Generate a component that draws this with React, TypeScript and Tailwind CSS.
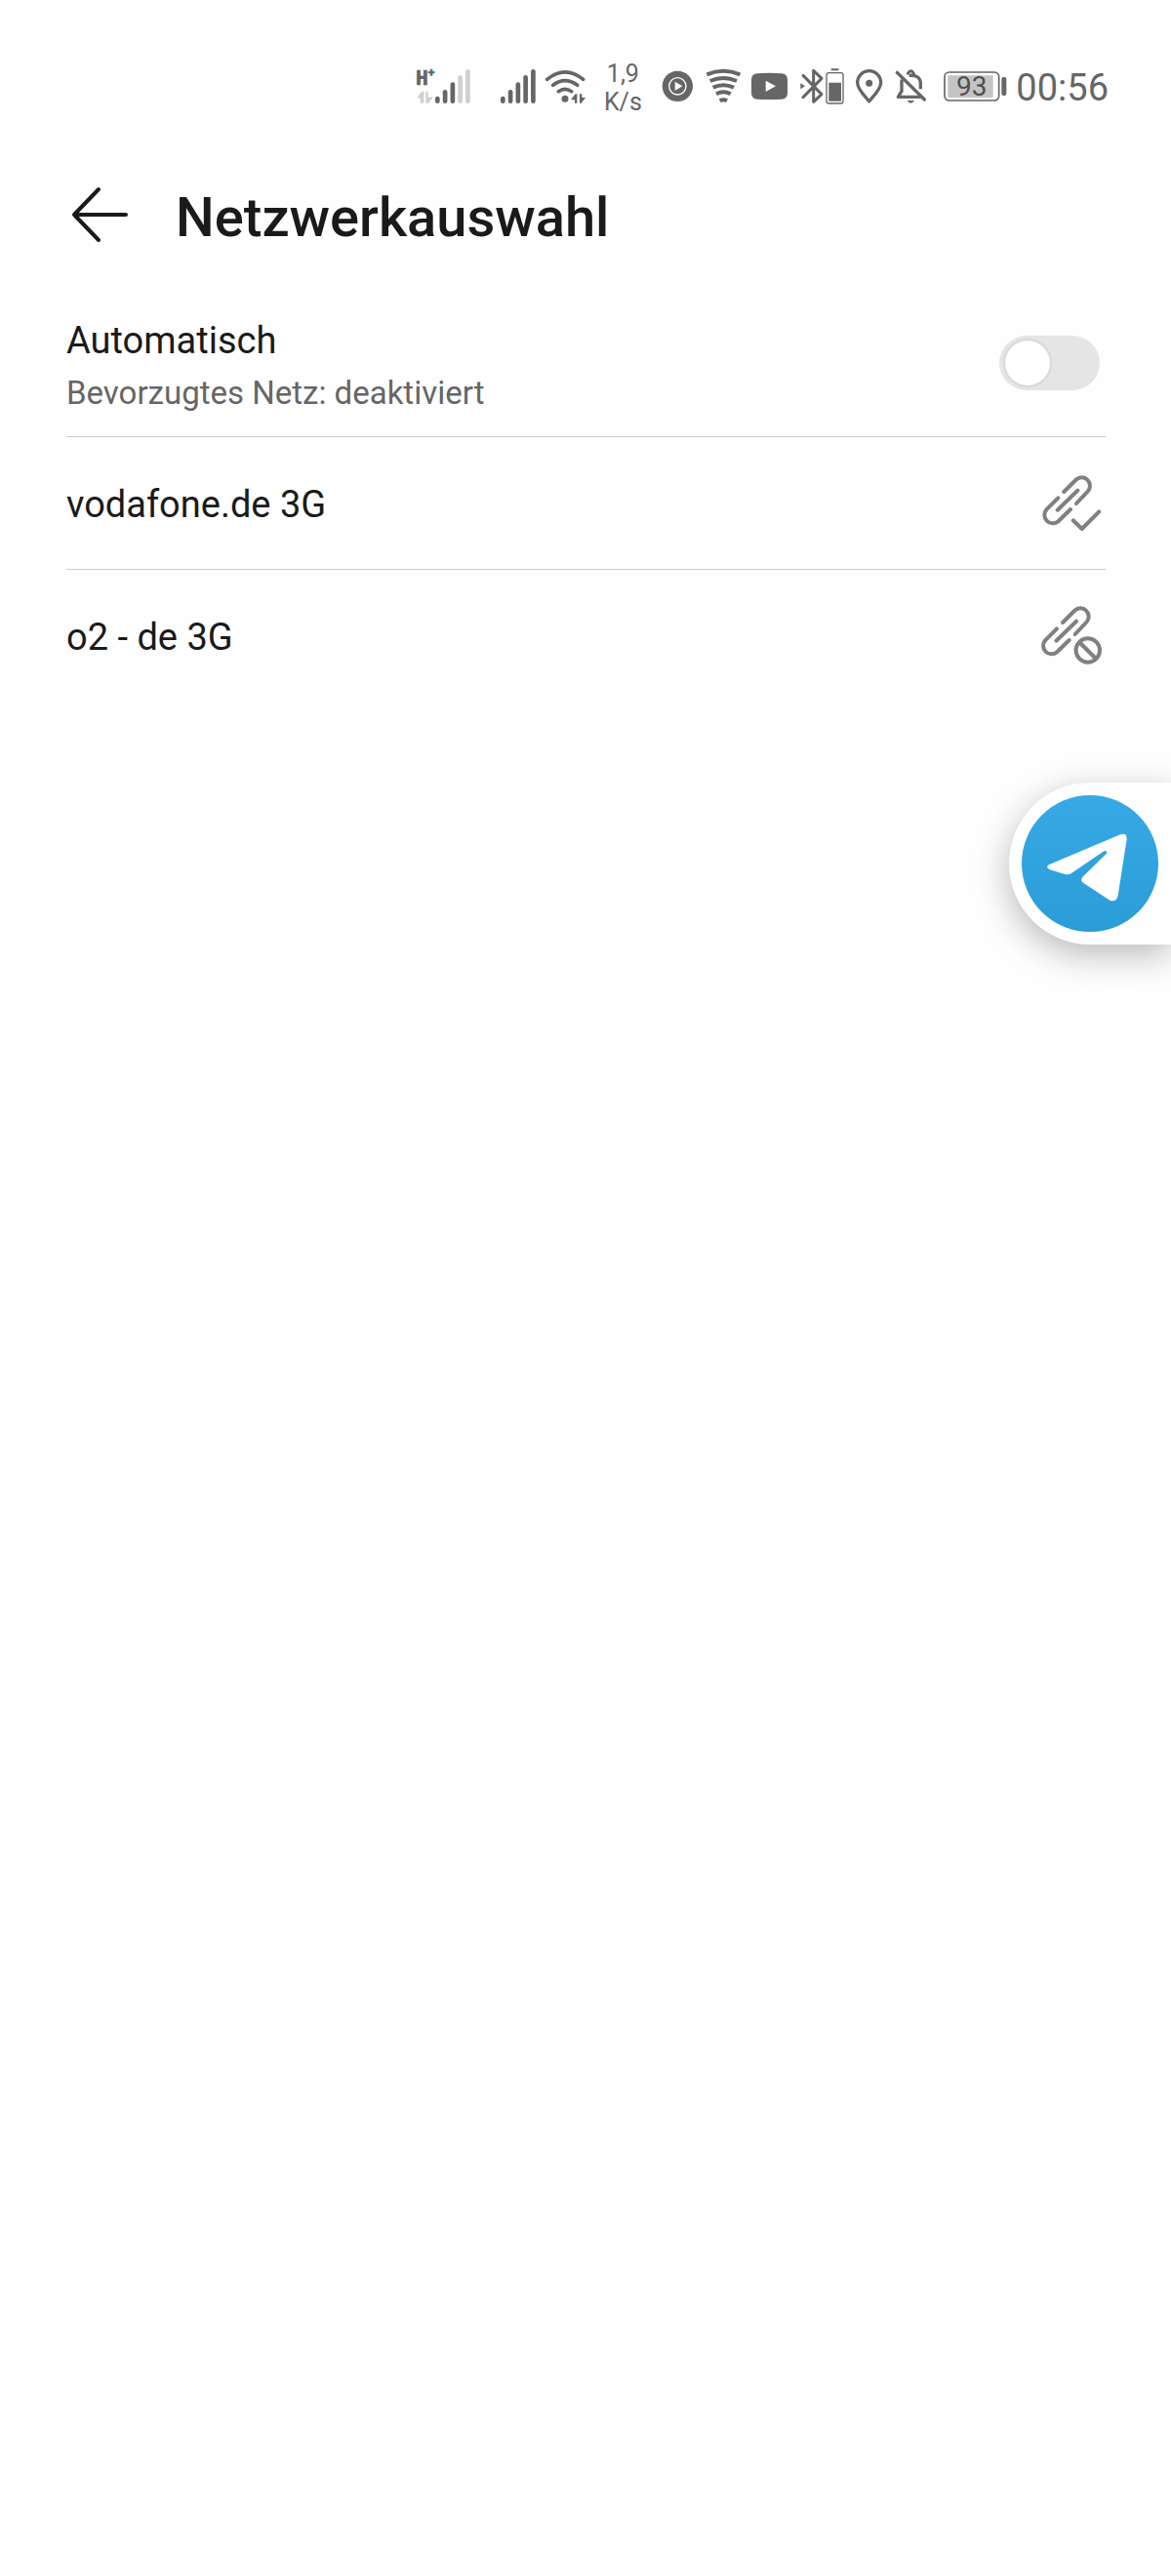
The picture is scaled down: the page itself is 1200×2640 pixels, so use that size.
import { useState } from "react";

const SignalBars = ({ x, active }: { x: number; active: number }) => (
  <g strokeWidth="14" strokeLinecap="round">
    {[153, 133, 110, 88, 70].map((top, i) => (
      <path
        key={top}
        d={`M${x + i * 23.3} ${top}V161`}
        stroke={i < active ? "#666666" : "#d0d0d0"}
      />
    ))}
  </g>
);

const StatusBar = () => (
  <header className="flex h-[180px] items-center justify-end gap-2 pr-16 text-[#666666]">
    {/* SIM 1 */}
    <svg
      className="h-10 w-[77px] overflow-visible"
      viewBox="45 60 231 120"
      fill="currentColor"
      aria-label="SIM 1"
    >
      <text
        x="45"
        y="110"
        fontSize="64"
        fontWeight="700"
        fontFamily="Liberation Mono, monospace"
        stroke="currentColor"
        strokeWidth="2"
      >
        H
      </text>
      <text
        x="83"
        y="88"
        fontSize="36"
        fontWeight="700"
        fontFamily="Roboto, sans-serif"
        stroke="currentColor"
        strokeWidth="2"
      >
        +
      </text>
      <path d="M49 151L63 131H70V167H59V152ZM76 131H83V149H98L84 167H76Z" fill="#d0d0d0" />
      <SignalBars x={112} active={3} />
    </svg>

    {/* SIM 2 */}
    <svg className="h-10 w-[39px]" viewBox="300 60 117 120" aria-label="SIM 2">
      <SignalBars x={313} active={5} />
    </svg>

    {/* WLAN */}
    <svg className="h-10 w-[42px]" viewBox="441 60 126 120" fill="none" aria-label="WLAN">
      <g stroke="currentColor" strokeWidth="11" strokeLinecap="round">
        <path d="M449 94Q504 49 560 94" />
        <path d="M467 112Q504 84 542 112" />
        <path d="M484 131Q504 117 524 131" />
      </g>
      <circle cx="504" cy="154" r="10.5" fill="currentColor" />
      <path
        d="M522 157L536 139H541V167H534V157ZM549 139H556V150H567L554 167H549Z"
        fill="currentColor"
      />
    </svg>

    <div className="w-[60px] text-center text-[25px] leading-[29px]">
      <div>1,9</div>
      <div>K/s</div>
    </div>

    {/* Music */}
    <svg className="h-10 w-[38px]" viewBox="45 60 114 120" aria-label="Musik">
      <circle cx="100" cy="115" r="47" fill="currentColor" />
      <circle cx="100" cy="115" r="26" fill="none" stroke="#fefefe" strokeWidth="4" />
      <path d="M92 101L115 115L92 129Z" fill="#fefefe" />
    </svg>

    {/* Hotspot */}
    <svg
      className="h-10 w-[38px]"
      viewBox="183 60 114 120"
      fill="none"
      stroke="currentColor"
      strokeWidth="12"
      aria-label="Netzanalyse"
    >
      <path d="M190 79Q241 58 292 79" />
      <path d="M200 99Q241 81 282 99" />
      <path d="M209 119Q241 105 273 119" />
      <path d="M219 139Q241 127 263 139" />
      <path d="M230 160Q241 154 252 160" />
    </svg>

    {/* YouTube */}
    <svg className="h-10 w-[42px]" viewBox="321 60 126 120" aria-label="YouTube">
      <path
        d="M345 76Q382 73 420 76Q437 77 438 94V137Q437 154 420 155Q382 157 345 155Q328 154 327 137V94Q328 77 345 76Z"
        fill="currentColor"
      />
      <path d="M371 98L402 115L371 132Z" fill="#fefefe" />
    </svg>

    {/* Bluetooth + headset battery */}
    <svg className="h-10 w-12" viewBox="471 60 144 120" fill="none" aria-label="Bluetooth">
      <path
        d="M486 82L543 140L518 163V67L543 91L486 149"
        stroke="currentColor"
        strokeWidth="9"
        strokeLinecap="round"
        strokeLinejoin="round"
      />
      <path d="M478 106L492 115L478 124Z" fill="currentColor" />
      <rect x="558" y="74" width="51" height="94" rx="7" stroke="currentColor" strokeWidth="4" />
      <path d="M565 104H603V161H565ZM572 61H595V67H572Z" fill="currentColor" />
    </svg>

    {/* Location */}
    <svg className="h-10 w-[34px]" viewBox="639 60 102 120" aria-label="Standort">
      <path
        d="M689 161C675 145 653 124 653 104A36 36 0 0 1 725 104C725 124 703 145 689 161Z"
        fill="none"
        stroke="currentColor"
        strokeWidth="10"
      />
      <circle cx="689" cy="106" r="10.5" fill="currentColor" />
    </svg>

    {/* Muted */}
    <svg
      className="h-10 w-[42px]"
      viewBox="45 60 126 120"
      fill="none"
      stroke="currentColor"
      strokeLinecap="round"
      aria-label="Stumm"
    >
      <path d="M55 73L139 156" strokeWidth="10" />
      <path d="M69 98V130L58 148H124" strokeWidth="10" strokeLinejoin="round" />
      <path d="M92 82Q127 80 127 106V124" strokeWidth="10" strokeLinecap="butt" />
      <path d="M88 76Q97 61 106 76" strokeWidth="9" />
      <path d="M86 159H108Q97 176 86 159Z" fill="currentColor" stroke="none" />
    </svg>

    {/* Battery */}
    <svg className="h-10 w-[67px]" viewBox="195 60 201 120" fill="none" aria-label="Akku">
      <rect x="201" y="72" width="167" height="87" rx="14" stroke="currentColor" strokeWidth="5" />
      <rect x="211" y="82" width="139" height="68" rx="3" fill="#c4c4c4" />
      <rect x="376" y="87" width="15" height="57" rx="6" fill="currentColor" />
      <text
        x="284"
        y="143"
        fontSize="84"
        textAnchor="middle"
        fontFamily="Roboto, sans-serif"
        fill="#4f4f4f"
      >
        93
      </text>
    </svg>

    <time className="text-[38px] leading-[44px]">00:56</time>
  </header>
);

const LinkShape = () => (
  <>
    <path d="M29.3 23L41.8 10.5A8.5 8.5 0 0 1 53.8 22.5L42 35" />
    <path d="M23.3 29.3L11.5 41.2A8.5 8.5 0 0 0 23.5 53.2L36 41" />
    <path d="M22.7 41.7L43.3 21.7" />
  </>
);

const NetworkIcon = ({ allowed }: { allowed: boolean }) => (
  <svg
    className="size-[72px]"
    viewBox="0 0 72 72"
    fill="none"
    stroke="#808080"
    strokeWidth="4"
    strokeLinecap="round"
    strokeLinejoin="round"
    aria-hidden="true"
  >
    {allowed ? (
      <>
        <LinkShape />
        <path d="M38.7 52.3L47.7 61L65.3 43.3" />
      </>
    ) : (
      <>
        <g transform="translate(-1.3 -2)">
          <LinkShape />
        </g>
        <circle cx="53.8" cy="49.5" r="12.2" />
        <path d="M45.5 41.5L62 58" />
      </>
    )}
  </svg>
);

const networks = [
  { name: "vodafone.de 3G", allowed: true },
  { name: "o2 - de 3G", allowed: false },
];

const App = () => {
  const [automatic, setAutomatic] = useState(false);

  return (
    <div className="relative min-h-screen bg-[#fefefe] font-['Roboto',sans-serif] text-[#1a1a1a]">
      <StatusBar />

      <div className="flex h-[86px] items-center gap-12 px-[68px]">
        <button type="button" aria-label="Zurück">
          <svg
            className="size-16"
            viewBox="0 0 64 64"
            fill="none"
            stroke="currentColor"
            strokeWidth="4"
            strokeLinecap="round"
            strokeLinejoin="round"
          >
            <path d="M33 3L8 29L33 55M8 29H61" />
          </svg>
        </button>
        <h1 className="text-[56px] leading-16 font-medium">Netzwerkauswahl</h1>
      </div>

      <main className="mt-[31px] pr-[67px] pl-[68px] text-[38px] leading-[52px]">
        <div className="flex h-[151px] items-center justify-between border-b border-[#cbcbcb] pr-1.5">
          <label htmlFor="automatic" className="pt-2">
            <span className="block">Automatisch</span>
            <span className="block pt-0.5 text-[33px] text-[#666666]">
              Bevorzugtes Netz: deaktiviert
            </span>
          </label>
          <input
            id="automatic"
            type="checkbox"
            role="switch"
            checked={automatic}
            onChange={(e) => setAutomatic(e.target.checked)}
            className="flex h-14 w-[103px] cursor-pointer appearance-none items-center rounded-full bg-[#e5e5e5] px-1.5 before:size-[46px] before:rounded-full before:bg-white before:shadow-[0_0_3px_1px_rgba(0,0,0,0.1)] before:content-[''] checked:justify-end checked:bg-[#007dff]"
          />
        </div>

        <ul>
          {networks.map(({ name, allowed }) => (
            <li key={name} className="border-b border-[#cbcbcb] last:border-b-0">
              <button
                type="button"
                className="flex h-[135px] w-full items-center justify-between pt-0.5 text-left"
              >
                <span>{name}</span>
                <NetworkIcon allowed={allowed} />
              </button>
            </li>
          ))}
        </ul>
      </main>

      {/* Floating chat shortcut docked to the screen edge */}
      <button
        type="button"
        aria-label="Telegram"
        className="absolute top-[802px] right-0 rounded-l-full bg-[#fefefe] p-[13px] shadow-[0_10px_36px_rgba(0,0,0,0.28)]"
      >
        <svg className="size-[140px]" viewBox="141 133 420 420">
          <defs>
            <linearGradient id="telegram" x1="0" y1="0" x2="0" y2="1">
              <stop offset="0" stopColor="#37a9e6" />
              <stop offset="1" stopColor="#2a9cd6" />
            </linearGradient>
          </defs>
          <circle cx="351" cy="343" r="210" fill="url(#telegram)" />
          <path
            d="M224 347L444 254Q465 248 464 268L437 441Q432 463 412 456L330 402Q320 394 328 384L402 312Q405 302 394 305L297 371Q288 379 274 376L228 362Q213 355 224 347Z"
            fill="#ffffff"
          />
        </svg>
      </button>
    </div>
  );
};

export default App;
